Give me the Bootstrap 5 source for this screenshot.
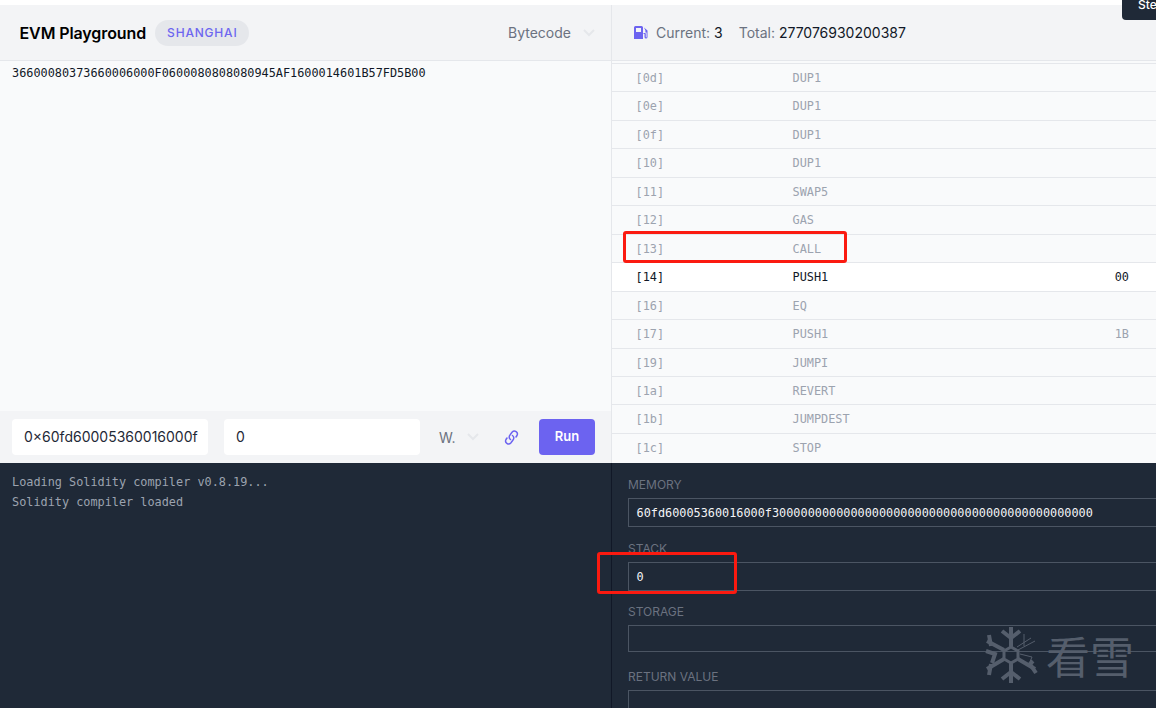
<!DOCTYPE html>
<html lang="en">
<head>
<meta charset="utf-8">
<title>EVM Playground</title>
<link href="https://cdn.jsdelivr.net/npm/bootstrap@5.3.0/dist/css/bootstrap.min.css" rel="stylesheet">
<style>
html,body{height:708px;overflow:hidden}
body{font-family:Inter,"Noto Sans",sans-serif;background:#fff;color:#111827;position:relative;padding-top:5px}
.mono{font-family:"DejaVu Sans Mono","Liberation Mono",monospace;font-size:11.85px}
.pane-top{height:458px}
.pane-bottom{height:245px;background:#1f2937}
.col-l{width:612px;flex:none;border-right:1px solid #e5e7eb}
.col-r{flex:1;min-width:0}
.head-bar{height:56px;background:#f3f4f6;border-bottom:1px solid #e5e7eb;flex:none}
.title{font-size:16px;font-weight:600;letter-spacing:-.1px;color:#000;margin-left:3.5px;margin-right:9px}
.fork-pill{font-size:12px;font-weight:500;letter-spacing:.8px;color:#6d66f0;background:#e5e7eb;border-radius:13px;padding:0 12px;height:26px;line-height:26px}
.sel-text{font-size:14px;color:#6b7280}
.editor{flex:1;background:#f9fafb;padding:6px 12px;color:#111827;line-height:13px}
.call-bar{height:52px;background:#f3f4f6;flex:none;padding:8px 16px 8px 12px}
.fake-in{height:36px;background:#fff;border-radius:4px;font-size:14px;padding:0 12px;line-height:36px;overflow:hidden;white-space:nowrap;color:#1f2937}
.in-a{width:196px;margin-right:16px}
.in-b{width:196px;margin-right:19px}
.unit{font-size:14px;color:#6b7280;width:65px;gap:12px}
.run-btn{width:56px;height:36px;background:#6c63f0;color:#fff;border:0;border-radius:4px;font-size:13px;font-weight:600;padding:0;margin-left:20px}
.gas{font-size:14px;color:#6b7280;padding-left:22px}
.gas b{font-weight:400;color:#111827}
.op-list{flex:1;overflow:hidden;background:#f9fafb;padding-top:2px}
.op-row{height:28.46px;border-top:1px solid #e5e7eb;color:#9ca3af;padding-left:23.5px;padding-right:27px;line-height:28.5px}
.op-row.cur{color:#111827;background:#fff}
.op-addr{width:157px}
.tip-box{position:absolute;right:0;top:0;width:34px;height:20px;background:#1f2937;border-radius:0 0 0 4px;color:#fff;font-size:12px;font-weight:500;padding-left:16px;overflow:hidden;line-height:9px}
.log{width:612px;flex:none;border-right:1px solid #111827;padding:9px 12px;color:#9ca3af;line-height:20px}
.state{flex:1;min-width:0;padding:14px 0 0 16px}
.st-label{font-size:12px;color:#6b7280;line-height:15px;margin-bottom:6px}
.st-box{border:1px solid #4b5563;border-right:0;color:#f3f4f6;padding:0 7.5px;margin-bottom:13px;line-height:28px;height:29px}
.st-box.first{margin-bottom:14px}
.st-box.s{height:27px;margin-bottom:17px}
.mark-red{position:absolute;border:3px solid #fb1a10;border-radius:3px}
.mark-a{left:623px;top:231px;width:224px;height:32px}
.mark-b{left:597px;top:552px;width:140px;height:42px}
.wm{position:absolute;left:984px;top:626px;display:flex;align-items:center;color:#555e6c}
.wm span{font-family:"Noto Sans CJK SC",sans-serif;font-size:44px;line-height:58px;letter-spacing:0;margin-left:8px;font-weight:400}
</style>
</head>
<body>
<div class="d-flex pane-top">
  <div class="col-l d-flex flex-column">
    <div class="head-bar d-flex align-items-center justify-content-between ps-3 pe-3">
      <div class="d-flex align-items-center">
        <span class="title">EVM Playground</span>
        <span class="fork-pill">SHANGHAI</span>
      </div>
      <div class="d-flex align-items-center gap-2">
        <span class="sel-text me-1">Bytecode</span>
        <svg width="12" height="8" viewBox="0 0 12 8" fill="none" stroke="#e5e7eb" stroke-width="2"><path d="M1 1l5 5 5-5"/></svg>
      </div>
    </div>
    <div class="editor mono">36600080373660006000F0600080808080945AF1600014601B57FD5B00</div>
    <div class="call-bar d-flex align-items-center">
      <div class="fake-in in-a">0×60fd60005360016000f</div>
      <div class="fake-in in-b">0</div>
      <div class="unit d-flex align-items-center">
        <span>W.</span>
        <svg width="12" height="8" viewBox="0 0 12 8" fill="none" stroke="#e5e7eb" stroke-width="2"><path d="M1 1l5 5 5-5"/></svg>
      </div>
      <svg width="15" height="15" viewBox="0 0 15 15" fill="none" stroke="#6c63f0" stroke-width="1.500" stroke-linecap="round"><path d="M6.500 9.500A3 3 0 0 1 6 5l2.200-3a3 3 0 0 1 4.800 3.500L12 7"/><path d="M8.500 5.500A3 3 0 0 1 9 10l-2.200 3a3 3 0 0 1-4.800-3.500L3 8"/></svg>
      <button class="run-btn" type="button">Run</button>
    </div>
  </div>
  <div class="col-r d-flex flex-column">
    <div class="head-bar d-flex align-items-center gas">
      <svg class="me-2" width="14" height="13" viewBox="0 0 14 13" fill="#6c63f0"><path fill-rule="evenodd" d="M0 1.500A1.500 1.500 0 0 1 1.500 0h6A1.500 1.500 0 0 1 9 1.500V13H0zM2 2v4h5V2z"/><path d="M10 1.500l3.500 3V11a1.500 1.500 0 0 1-3 0V8H9.500V7H11a.8.8 0 0 1 .8.8V11a.4.4 0 0 0 .8 0V6.500h-1.200V4.500z"/></svg>
      <span class="me-3">Current: <b>3</b></span>
      <span>Total: <b>277076930200387</b></span>
    </div>
    <div class="op-list mono">
      <div class="op-row d-flex"><span class="op-addr">[0d]</span><span>DUP1</span></div>
      <div class="op-row d-flex"><span class="op-addr">[0e]</span><span>DUP1</span></div>
      <div class="op-row d-flex"><span class="op-addr">[0f]</span><span>DUP1</span></div>
      <div class="op-row d-flex"><span class="op-addr">[10]</span><span>DUP1</span></div>
      <div class="op-row d-flex"><span class="op-addr">[11]</span><span>SWAP5</span></div>
      <div class="op-row d-flex"><span class="op-addr">[12]</span><span>GAS</span></div>
      <div class="op-row d-flex"><span class="op-addr">[13]</span><span>CALL</span></div>
      <div class="op-row cur d-flex"><span class="op-addr">[14]</span><span>PUSH1</span><span class="ms-auto">00</span></div>
      <div class="op-row d-flex"><span class="op-addr">[16]</span><span>EQ</span></div>
      <div class="op-row d-flex"><span class="op-addr">[17]</span><span>PUSH1</span><span class="ms-auto">1B</span></div>
      <div class="op-row d-flex"><span class="op-addr">[19]</span><span>JUMPI</span></div>
      <div class="op-row d-flex"><span class="op-addr">[1a]</span><span>REVERT</span></div>
      <div class="op-row d-flex"><span class="op-addr">[1b]</span><span>JUMPDEST</span></div>
      <div class="op-row d-flex"><span class="op-addr">[1c]</span><span>STOP</span></div>
    </div>
  </div>
</div>
<div class="d-flex pane-bottom">
  <div class="log mono">Loading Solidity compiler v0.8.19...<br>Solidity compiler loaded</div>
  <div class="state">
    <div class="st-label">MEMORY</div>
    <div class="st-box mono first">60fd60005360016000f300000000000000000000000000000000000000000000</div>
    <div class="st-label">STACK</div>
    <div class="st-box mono">0</div>
    <div class="st-label">STORAGE</div>
    <div class="st-box mono s"></div>
    <div class="st-label">RETURN VALUE</div>
    <div class="st-box mono"></div>
  </div>
</div>
<div class="tip-box">Ste</div>
<div class="mark-red mark-a"></div>
<div class="mark-red mark-b"></div>
<div class="wm">
  <svg width="54" height="58" viewBox="0 0 54 58" fill="none" stroke="#555e6c" stroke-width="4">
    <path d="M27 1v20M27 37v20M3 15l17 9M34 33l17 10M3 43l17-10"/>
    <path d="M18 5l9 7 9-7M18 53l9-7 9 7M2 25l9 3-3 9M52 47l-6-9 3-3M5 9l2 11M5 49l2-11"/>
    <path stroke-width="3" d="M27 21l7 4v8l-7 4-7-4v-8z"/>
    <path stroke-width="1" d="M34 24l17-9M33 21l14-9M40 20V8M36 28l12 3-3 7"/>
  </svg>
  <span>看雪</span>
</div>
<script src="https://cdn.jsdelivr.net/npm/bootstrap@5.3.0/dist/js/bootstrap.bundle.min.js"></script>
</body>
</html>
